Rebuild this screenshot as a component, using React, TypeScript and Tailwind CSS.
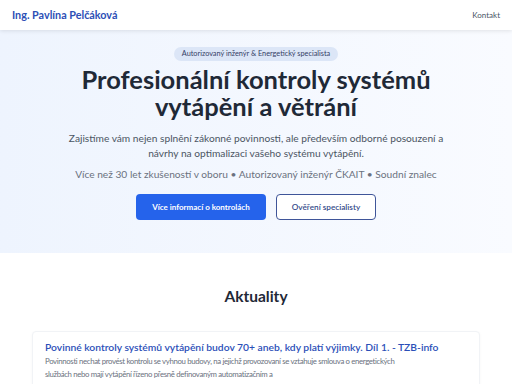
import React from "react";

export default function App() {
  return (
    <div className="min-h-screen bg-white text-gray-800" style={{ fontFamily: 'Lato, "Noto Sans", sans-serif' }}>
      <header className="relative z-10 flex h-[30px] items-center justify-between bg-white px-3 shadow-[0_1px_4px_rgba(0,0,0,0.1)]">
        <span className="text-[10.8px] font-bold text-[#2c4fb6]">Ing. Pavlína Pelčáková</span>
        <span className="text-[8px] text-gray-600">Kontakt</span>
      </header>

      <section className="flex h-[223px] flex-col items-center bg-gradient-to-r from-[#eef4fe] to-[#f9fbff] pt-[17px]">
        <span className="rounded-full bg-[#dce6f7] px-[8px] py-[2px] text-[7.3px] leading-[10px] text-[#344066]">
          Autorizovaný inženýr &amp; Energetický specialista
        </span>
        <h1 className="mt-[5px] text-center text-[25.5px] font-bold leading-[27px] text-[#1f2937]">
          Profesionální kontroly systémů
          <br />
          vytápění a větrání
        </h1>
        <p className="mt-[11px] text-center text-[10.2px] leading-[15px] text-[#4b5563]">
          Zajistíme vám nejen splnění zákonné povinnosti, ale především odborné posouzení a
          <br />
          návrhy na optimalizaci vašeho systému vytápění.
        </p>
        <p className="mt-[6px] text-center text-[10.2px] text-[#6b7280]">
          Více než 30 let zkušeností v oboru • Autorizovaný inženýr ČKAIT • Soudní znalec
        </p>
        <div className="mt-[12px] flex gap-[10px]">
          <button className="h-[26px] w-[130px] rounded-[4px] bg-[#2563eb] text-[8px] font-bold text-white">
            Více informací o kontrolách
          </button>
          <button className="h-[26px] w-[100px] rounded-[4px] border-[1.5px] border-[#3f5599] bg-white text-[8.2px] font-semibold text-[#334a8a]">
            Ověření specialisty
          </button>
        </div>
      </section>

      <section className="flex flex-col items-center pt-[32px]">
        <h2 className="text-[15.5px] font-bold text-[#1f2937]">Aktuality</h2>
        <div className="mt-[23px] w-[448px] rounded-t-[4px] border border-[#f1f3f6] bg-white px-[12px] pt-[7px] pb-[10px] shadow-[0_1px_3px_rgba(0,0,0,0.04)]">
          <h3 className="whitespace-nowrap text-[10.3px] font-semibold leading-[16px] text-[#2b4fb8]">
            Povinné kontroly systémů vytápění budov 70+ aneb, kdy platí výjimky. Díl 1. - TZB-info
          </h3>
          <p className="mt-[0px] max-w-[352px] text-[7.8px] leading-[13px] tracking-[-0.35px] text-[#6b7280]">
            Povinnosti nechat provést kontrolu se vyhnou budovy, na jejichž provozovaní se vztahuje smlouva o energetických službách nebo mají vytápění řízeno přesně definovaným automatizačním a
          </p>
        </div>
      </section>
    </div>
  );
}
